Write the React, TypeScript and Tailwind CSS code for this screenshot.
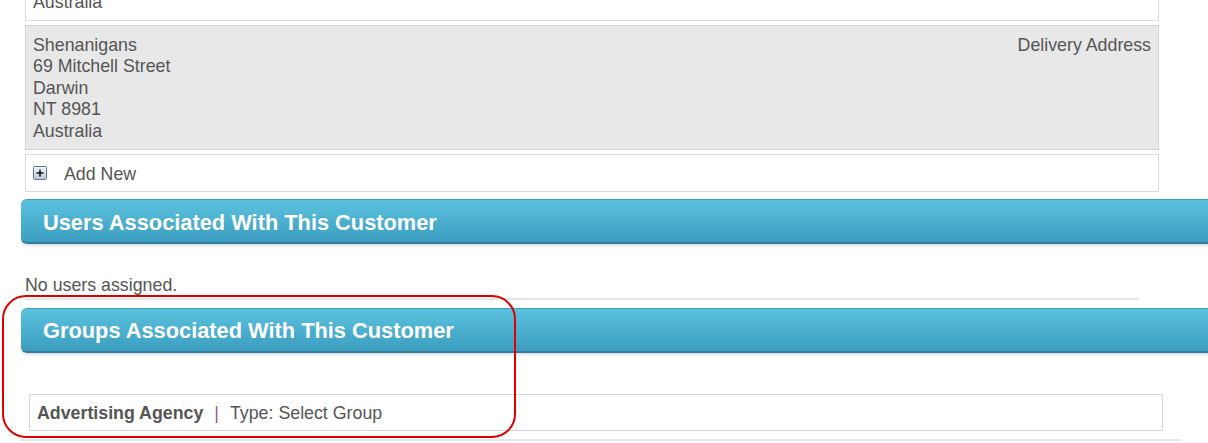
import React from "react";

function PlusIcon() {
  return (
    <svg width="14" height="14" viewBox="0 0 14 14" className="block">
      <defs>
        <linearGradient id="pg" x1="0" y1="0" x2="0" y2="1">
          <stop offset="0" stopColor="#f2f6fb" />
          <stop offset="1" stopColor="#b9c7d8" />
        </linearGradient>
      </defs>
      <rect x="0.5" y="0.5" width="13" height="13" rx="1" fill="url(#pg)" stroke="#5f7591" />
      <path d="M3.5 7h7M7 3.5v7" stroke="#111" strokeWidth="1.5" />
    </svg>
  );
}

function Bar({ title }: { title: string }) {
  return (
    <div className="ml-[21px] w-[1200px] h-[45px] rounded-l-[6px] border-t border-[#3d9cbc] border-b-2 border-b-[#2f7d98] bg-gradient-to-b from-[#5cc1df] to-[#3b9ec0] shadow-[0_2px_2px_rgba(0,0,0,0.12)] flex items-center pl-[22px] pt-[3px]">
      <span className="text-white font-bold text-[21.8px] leading-none">{title}</span>
    </div>
  );
}

export default function App() {
  return (
    <div className="relative w-[1208px] h-[443px] overflow-hidden bg-white text-[#555] text-[17.8px] leading-[21.5px] font-['Liberation_Sans',Arial,sans-serif]">
      <div className="pl-[25px] w-[1159px]">
        <div className="-mt-[9px] border border-[#dadada] bg-white pl-[7px] pb-[6px]">
          <div>Australia</div>
        </div>
        <div className="mt-[4px] border border-[#d4d4d4] bg-[#e8e8e8] pl-[7px] pr-[7px] pt-[9px] pb-[7px] flex justify-between">
          <div className="flex flex-col">
            <span>Shenanigans</span>
            <span>69 Mitchell Street</span>
            <span>Darwin</span>
            <span>NT 8981</span>
            <span>Australia</span>
          </div>
          <div>Delivery Address</div>
        </div>
        <div className="mt-[4px] h-[38px] border border-[#dadada] bg-white flex items-center pl-[7px] gap-[17px]">
          <PlusIcon />
          <span className="pt-[3px]">Add New</span>
        </div>
      </div>

      <div className="mt-[7px]">
        <Bar title="Users Associated With This Customer" />
      </div>

      <div className="mt-[31px] pl-[25px]">No users assigned.</div>
      <div className="mt-[1px] ml-[25px] w-[1114px] h-[2px] bg-[#e6e6e6]" />

      <div className="mt-[8px]">
        <Bar title="Groups Associated With This Customer" />
      </div>

      <div className="mt-[41px] ml-[29px] w-[1134px] h-[37px] border border-[#d6d6d6] flex items-center pl-[7px] pt-[3px]">
        <span className="font-bold">Advertising Agency</span>
        <span className="mx-[11px] text-[#8e5e9e]">|</span>
        <span>Type: Select Group</span>
      </div>
      <div className="mt-[8px] ml-[20px] w-[1161px] h-[2px] bg-[#e8e8e8]" />

      <div className="absolute left-[2px] top-[295px] w-[514px] h-[143px] rounded-[24px] border-2 border-[#e00000] pointer-events-none" />
    </div>
  );
}
